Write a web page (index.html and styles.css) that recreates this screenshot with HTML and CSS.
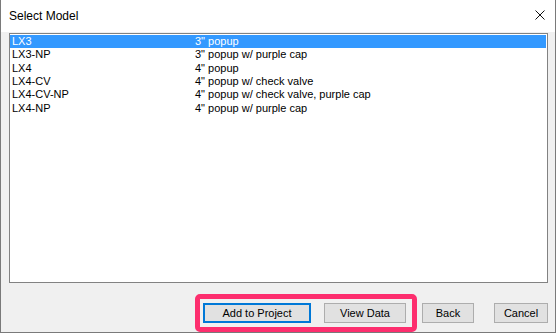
FILE: index.html
```html
<!DOCTYPE html>
<html lang="en">
<head>
  <meta charset="UTF-8" />
  <title>Select Model</title>
  <link rel="stylesheet" href="styles.css">
</head>
<body>
  <div class="window">
    <div class="titlebar">
      <span class="title">Select Model</span>
      <svg class="close" width="10" height="10" viewBox="0 0 10 10">
        <path d="M0.5 0.5 L9.5 9.5 M9.5 0.5 L0.5 9.5" stroke="#111" stroke-width="1" fill="none" />
      </svg>
    </div>

    <div class="content">
      <div class="listbox">
        <div class="row selected"><span class="col-model">LX3</span><span>3" popup</span></div>
        <div class="row"><span class="col-model">LX3-NP</span><span>3" popup w/ purple cap</span></div>
        <div class="row"><span class="col-model">LX4</span><span>4" popup</span></div>
        <div class="row"><span class="col-model">LX4-CV</span><span>4" popup w/ check valve</span></div>
        <div class="row"><span class="col-model">LX4-CV-NP</span><span>4" popup w/ check valve, purple cap</span></div>
        <div class="row"><span class="col-model">LX4-NP</span><span>4" popup w/ purple cap</span></div>
      </div>

      <div class="buttons">
        <button class="btn default btn-add">Add to Project</button>
        <button class="btn btn-view">View Data</button>
        <button class="btn btn-back">Back</button>
        <button class="btn btn-cancel">Cancel</button>
      </div>
    </div>

    <!-- highlight drawn over the first two buttons -->
    <div class="highlight"></div>
  </div>
</body>
</html>
```

FILE: styles.css
```css
body {
  margin: 0;
  font-family: "Liberation Sans", Arial, sans-serif;
  background-color: #ffffff;
}

.window {
  position: relative;
  width: 556px;
  height: 333px;
  box-sizing: border-box;
  border-left: 1px solid #7a7a7a;
  border-right: 1px solid #7a7a7a;
  border-bottom: 1px solid #7a7a7a;
  background-color: #f0f0f0;
  overflow: hidden;
}

.titlebar {
  height: 32px;
  background-color: #ffffff;
  display: flex;
  align-items: center;
  justify-content: space-between;
  padding: 0 10px 0 8px;
}

.title {
  font-size: 12px;
  color: #000;
  margin-top: -1px;
}

.close {
  display: block;
  margin-top: -2px;
}

.content {
  padding: 1px 7px 0 8px;
}

.listbox {
  height: 250px;
  box-sizing: border-box;
  border: 1px solid #828282;
  background-color: #ffffff;
  padding-top: 1px;
}

.row {
  display: flex;
  height: 13.33px;
  line-height: 13px;
  font-size: 11px;
  color: #000;
  padding-left: 2px;
  margin-right: 1px;
}

.row.selected {
  background-color: #3399ff;
  color: #ffffff;
}

.col-model {
  width: 183px;
  flex-shrink: 0;
}

.buttons {
  display: flex;
  justify-content: flex-end;
  margin-top: 20px;
}

.btn {
  height: 20px;
  box-sizing: border-box;
  border: 1px solid #adadad;
  background-color: #e1e1e1;
  font-family: "Liberation Sans", Arial, sans-serif;
  font-size: 11px;
  color: #000;
  padding: 0;
  line-height: 17px;
}

.btn.default {
  border: 2px solid #0078d7;
  line-height: 15px;
}

.btn-add {
  width: 108px;
}

.btn-view {
  width: 82px;
  margin-left: 13px;
}

.btn-back {
  width: 52px;
  margin-left: 16px;
}

.btn-cancel {
  width: 54px;
  margin-left: 20px;
}

.highlight {
  position: absolute;
  left: 194px;
  top: 294px;
  width: 222px;
  height: 38px;
  box-sizing: border-box;
  border: 5px solid #fd2e6e;
  border-radius: 5px;
}
```
